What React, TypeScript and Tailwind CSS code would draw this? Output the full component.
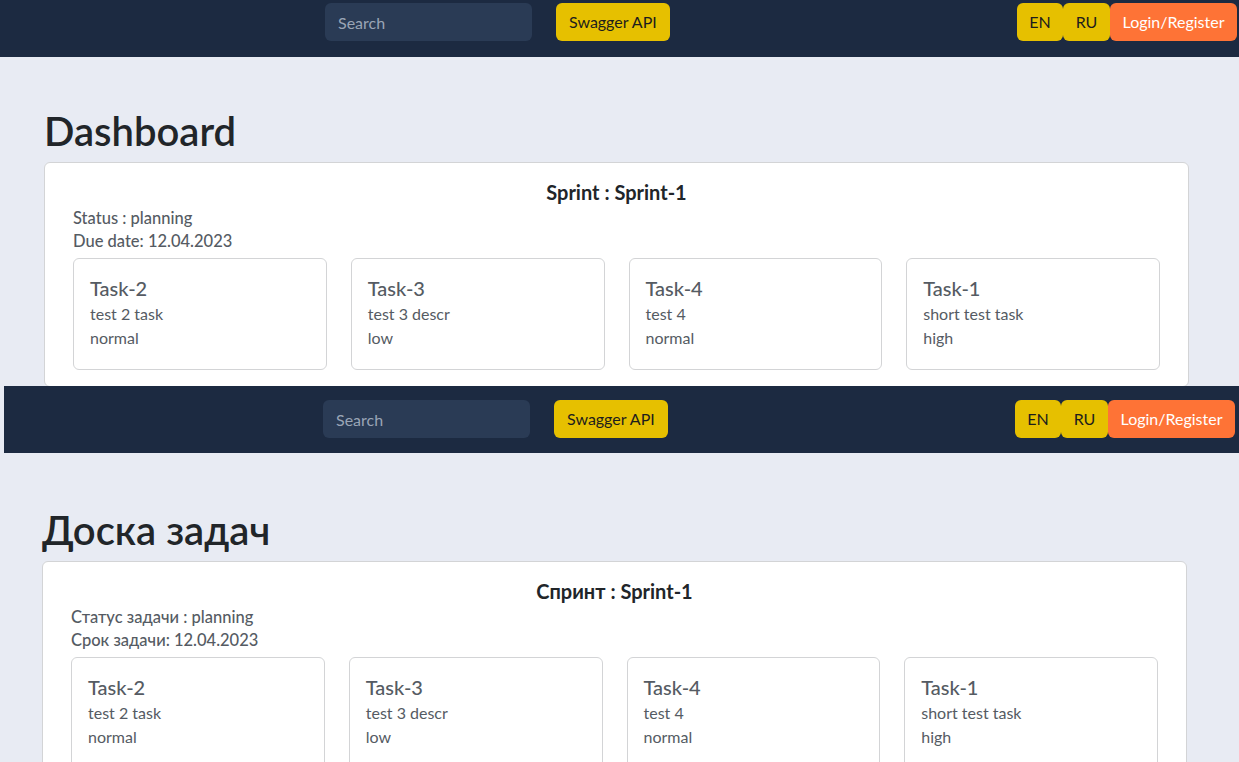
const tasks = [
  { id: "Task-2", text: "test 2 task", priority: "normal" },
  { id: "Task-3", text: "test 3 descr", priority: "low" },
  { id: "Task-4", text: "test 4", priority: "normal" },
  { id: "Task-1", text: "short test task", priority: "high" },
];

type Labels = {
  title: string;
  sprint: string;
  status: string;
  due: string;
};

const en: Labels = {
  title: "Dashboard",
  sprint: "Sprint : Sprint-1",
  status: "Status : planning",
  due: "Due date: 12.04.2023",
};

const ru: Labels = {
  title: "Доска задач",
  sprint: "Спринт : Sprint-1",
  status: "Статус задачи : planning",
  due: "Срок задачи: 12.04.2023",
};

function Navbar({ className }: { className: string }) {
  return (
    <nav className={`flex h-[67px] shrink-0 items-start bg-[#1c2a41] ${className}`}>
      <input
        placeholder="Search"
        className="h-[38px] w-[207px] rounded-md bg-[#2a3b55] px-[13px] text-[16px] text-white outline-none placeholder:text-[#9aa5b5]"
      />
      <button className="ml-[24px] h-[38px] rounded-md bg-[#e6c000] px-[13px] text-[16px] text-[#1d1d1d]">
        Swagger API
      </button>
      <div className="ml-auto flex">
        <button className="h-[38px] w-[46px] rounded-md bg-[#e6c000] text-[16px] text-[#1d1d1d]">EN</button>
        <button className="h-[38px] w-[47px] rounded-md bg-[#e6c000] text-[16px] text-[#1d1d1d]">RU</button>
        <button className="h-[38px] w-[127px] rounded-md bg-[#fe7336] text-[16px] text-white">
          Login/Register
        </button>
      </div>
    </nav>
  );
}

function TaskCard({ id, text, priority }: (typeof tasks)[number]) {
  return (
    <div className="h-[112px] rounded-md border border-[#d3d4d6] bg-white px-4 pt-[17px] text-[#555b63]">
      <div className="mb-[2px] text-[20px] leading-[24px] font-medium">{id}</div>
      <div className="text-[16px] leading-[24px]">{text}</div>
      <div className="text-[16px] leading-[24px]">{priority}</div>
    </div>
  );
}

function Board({ labels, className }: { labels: Labels; className: string }) {
  return (
    <div className={className}>
      <h1 className="mb-[6px] text-[40px] leading-[49px] font-semibold text-[#212529]">{labels.title}</h1>
      <div className="w-[1145px] rounded-md border border-[#d3d4d6] bg-white px-[28px] pt-[17px] pb-4">
        <h5 className="mb-[3px] text-center text-[20px] leading-[24px] font-bold text-[#212529]">
          {labels.sprint}
        </h5>
        <div className="text-[16.5px] leading-[23px] font-medium text-[#555b63]">{labels.status}</div>
        <div className="text-[16.5px] leading-[23px] font-medium text-[#555b63]">{labels.due}</div>
        <div className="mt-[5px] grid grid-cols-4 gap-6">
          {tasks.map((t) => (
            <TaskCard key={t.id} {...t} />
          ))}
        </div>
      </div>
    </div>
  );
}

export default function App() {
  return (
    <div
      className="h-[762px] w-[1239px] overflow-hidden bg-[#e8ebf3]"
      style={{ fontFamily: "Lato, 'Noto Sans', sans-serif" }}
    >
      <section className="flex h-[386px] flex-col overflow-hidden">
        <Navbar className="-mt-[10px] pt-[13px] pl-[325px] pr-[2px]" />
        <div className="h-[2px] bg-[#f3f4f8]" />
        <Board labels={en} className="pt-[50px] pl-[44px]" />
      </section>
      <section className="flex h-[376px] flex-col overflow-hidden">
        <Navbar className="ml-[4px] pt-[14px] pl-[319px] pr-[4px]" />
        <div className="ml-[4px] h-[2px] bg-[#f3f4f8]" />
        <Board labels={ru} className="pt-[53px] pl-[42px]" />
      </section>
    </div>
  );
}
